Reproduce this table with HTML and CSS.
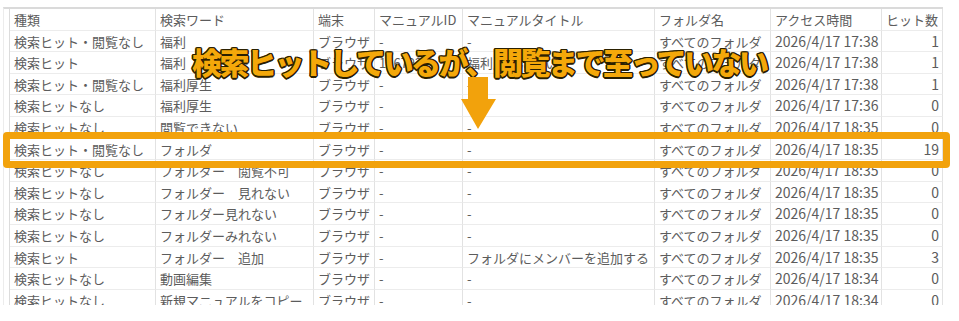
FILE: index.html
```html
<!DOCTYPE html>
<html lang="ja">
<head>
<meta charset="utf-8">
<link rel="stylesheet" href="styles.css">
</head>
<body>
<div class="page">
  <div class="sheet">
    <div class="table">
      <div class="row head">
        <div class="c">種類</div><div class="c">検索ワード</div><div class="c">端末</div><div class="c">マニュアルID</div><div class="c">マニュアルタイトル</div><div class="c">フォルダ名</div><div class="c">アクセス時間</div><div class="c">ヒット数</div>
      </div>
      <div class="row"><div class="c">検索ヒット・閲覧なし</div><div class="c">福利</div><div class="c">ブラウザ</div><div class="c">-</div><div class="c">-</div><div class="c">すべてのフォルダ</div><div class="c r">2026/4/17 17:38</div><div class="c r">1</div></div>
      <div class="row"><div class="c">検索ヒット</div><div class="c">福利</div><div class="c">ブラウザ</div><div class="c">156792</div><div class="c">福利厚生について</div><div class="c">すべてのフォルダ</div><div class="c r">2026/4/17 17:38</div><div class="c r">1</div></div>
      <div class="row"><div class="c">検索ヒット・閲覧なし</div><div class="c">福利厚生</div><div class="c">ブラウザ</div><div class="c">-</div><div class="c">-</div><div class="c">すべてのフォルダ</div><div class="c r">2026/4/17 17:38</div><div class="c r">1</div></div>
      <div class="row"><div class="c">検索ヒットなし</div><div class="c">福利厚生</div><div class="c">ブラウザ</div><div class="c">-</div><div class="c">-</div><div class="c">すべてのフォルダ</div><div class="c r">2026/4/17 17:36</div><div class="c r">0</div></div>
      <div class="row"><div class="c">検索ヒットなし</div><div class="c">閲覧できない</div><div class="c">ブラウザ</div><div class="c">-</div><div class="c">-</div><div class="c">すべてのフォルダ</div><div class="c r">2026/4/17 18:35</div><div class="c r">0</div></div>
      <div class="row"><div class="c">検索ヒット・閲覧なし</div><div class="c">フォルダ</div><div class="c">ブラウザ</div><div class="c">-</div><div class="c">-</div><div class="c">すべてのフォルダ</div><div class="c r">2026/4/17 18:35</div><div class="c r">19</div></div>
      <div class="row"><div class="c">検索ヒットなし</div><div class="c">フォルダー　閲覧不可</div><div class="c">ブラウザ</div><div class="c">-</div><div class="c">-</div><div class="c">すべてのフォルダ</div><div class="c r">2026/4/17 18:35</div><div class="c r">0</div></div>
      <div class="row"><div class="c">検索ヒットなし</div><div class="c">フォルダー　見れない</div><div class="c">ブラウザ</div><div class="c">-</div><div class="c">-</div><div class="c">すべてのフォルダ</div><div class="c r">2026/4/17 18:35</div><div class="c r">0</div></div>
      <div class="row"><div class="c">検索ヒットなし</div><div class="c">フォルダー見れない</div><div class="c">ブラウザ</div><div class="c">-</div><div class="c">-</div><div class="c">すべてのフォルダ</div><div class="c r">2026/4/17 18:35</div><div class="c r">0</div></div>
      <div class="row"><div class="c">検索ヒットなし</div><div class="c">フォルダーみれない</div><div class="c">ブラウザ</div><div class="c">-</div><div class="c">-</div><div class="c">すべてのフォルダ</div><div class="c r">2026/4/17 18:35</div><div class="c r">0</div></div>
      <div class="row"><div class="c">検索ヒット</div><div class="c">フォルダー　追加</div><div class="c">ブラウザ</div><div class="c">-</div><div class="c">フォルダにメンバーを追加する</div><div class="c">すべてのフォルダ</div><div class="c r">2026/4/17 18:35</div><div class="c r">3</div></div>
      <div class="row"><div class="c">検索ヒットなし</div><div class="c">動画編集</div><div class="c">ブラウザ</div><div class="c">-</div><div class="c">-</div><div class="c">すべてのフォルダ</div><div class="c r">2026/4/17 18:34</div><div class="c r">0</div></div>
      <div class="row"><div class="c">検索ヒットなし</div><div class="c">新規マニュアルをコピー</div><div class="c">ブラウザ</div><div class="c">-</div><div class="c">-</div><div class="c">すべてのフォルダ</div><div class="c r">2026/4/17 18:34</div><div class="c r">0</div></div>
    </div>
  </div>

  <div class="highlight"></div>
  <div class="caption">検索ヒットしているが、閲覧まで至っていない</div>
  <svg class="arrow" width="36" height="52" viewBox="0 0 36 52">
    <path d="M7 0 H27 V22 H35 L17 52 L0 22 H7 Z" fill="#f2a20c"/>
  </svg>
</div>
</body>
</html>
```

FILE: styles.css
```css
html, body {
  margin: 0;
  padding: 0;
  background: #ffffff;
}

.page {
  position: relative;
  width: 959px;
  height: 321px;
  overflow: hidden;
  font-family: "Noto Sans CJK JP", "Noto Sans", sans-serif;
}

.sheet {
  margin: 7px 0 0 3px;
  padding-left: 5px;
  width: 934px;
  height: 296px;
  overflow: hidden;
  border-left: 1px solid #ececec;
  border-top: 2px solid #dadada;
}

.table {
  display: grid;
  grid-auto-rows: 21.6px;
  border-left: 1px solid #dcdcdc;
}

.row {
  display: grid;
  grid-template-columns: 146px 158px 61px 88px 192px 116px 111px 61px;
}

.c {
  font-size: 13px;
  line-height: 21px;
  color: #5c5c5c;
  padding: 0 3px 0 4px;
  border-right: 1px solid #e2e2e2;
  border-bottom: 1px solid #ececec;
  white-space: nowrap;
  overflow: hidden;
}

.c.r {
  text-align: right;
  font-size: 14px;
}

.highlight {
  position: absolute;
  left: 3px;
  top: 132px;
  width: 933px;
  height: 22px;
  border: 7px solid #f2a20c;
  border-radius: 4px;
}

.caption {
  position: absolute;
  left: 192px;
  top: 41px;
  font-size: 30px;
  line-height: 40px;
  font-weight: 900;
  letter-spacing: -2.5px;
  color: #f4a80a;
  white-space: nowrap;
  text-shadow:
    1.5px 0 0 #2a2000, -1.5px 0 0 #2a2000, 0 1.5px 0 #2a2000, 0 -1.5px 0 #2a2000,
    1px 1px 0 #2a2000, -1px -1px 0 #2a2000, 1px -1px 0 #2a2000, -1px 1px 0 #2a2000;
}

.arrow {
  position: absolute;
  left: 461px;
  top: 77px;
}
```
